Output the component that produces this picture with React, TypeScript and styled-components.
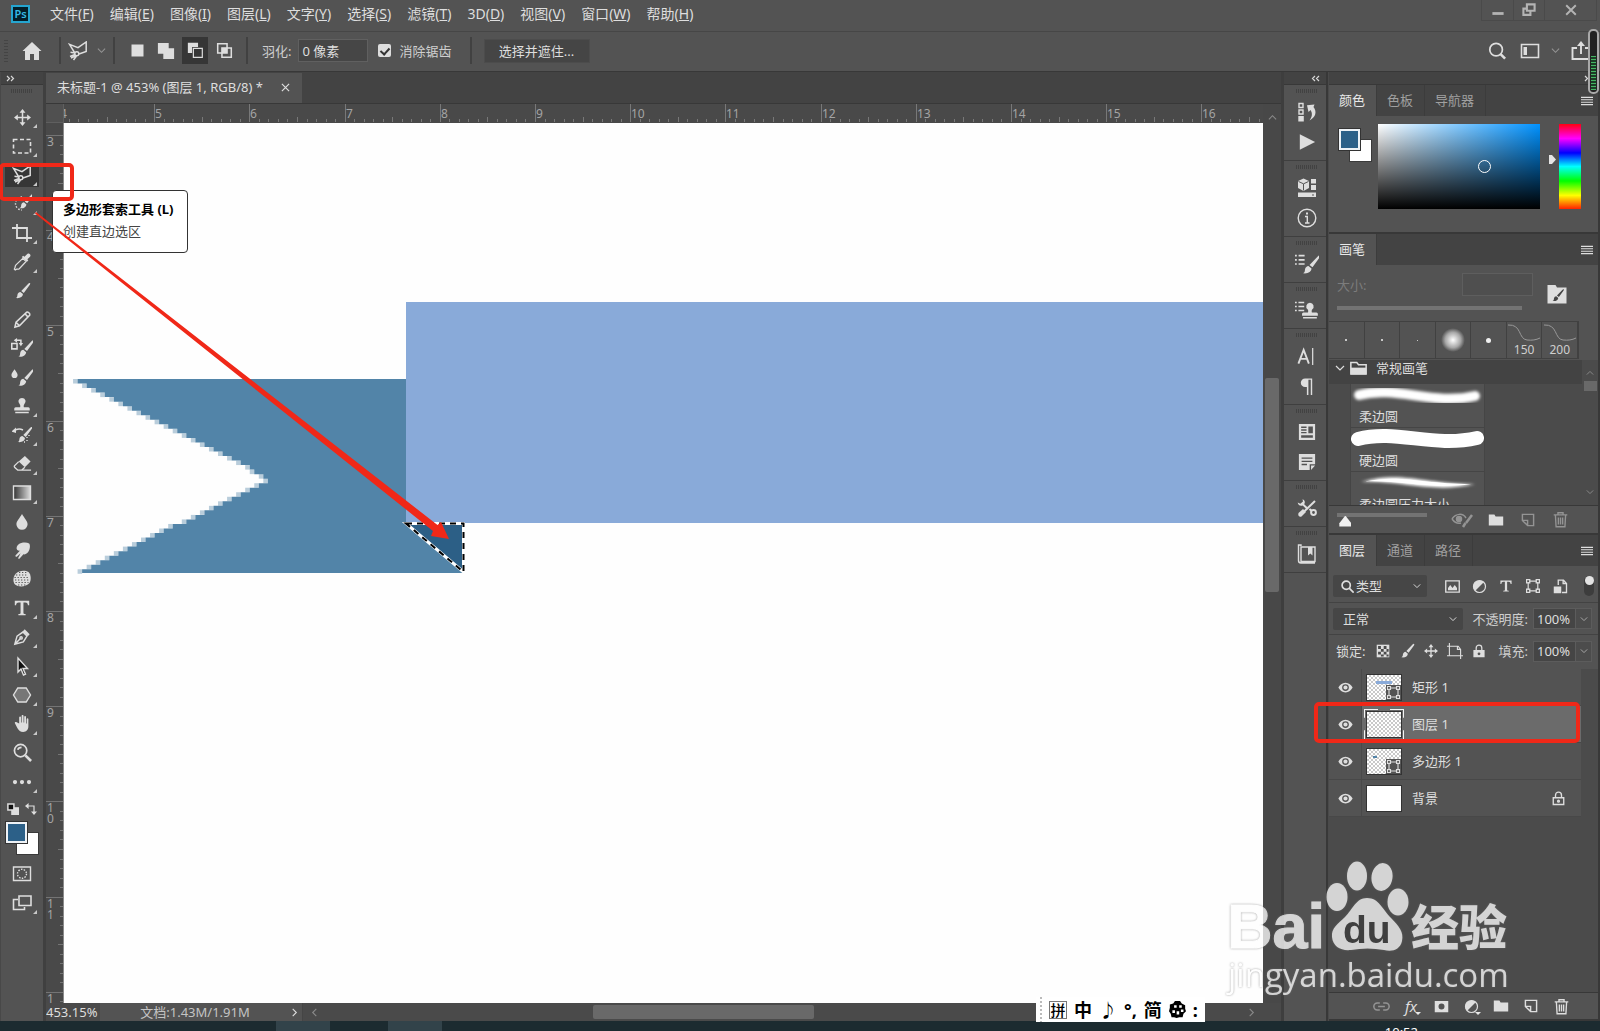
import React from "react";
import styled, { createGlobalStyle, css } from "styled-components";

const c = {
  panel: "#535353",
  dark: "#434343",
  deep: "#383838",
  list: "#4b4b4b",
  text: "#dedede",
  dim: "#a0a0a0",
  red: "#f02818",
};

const Global = createGlobalStyle`
  * { box-sizing: border-box; }
  body {
    margin: 0;
    background: ${c.panel};
    color: ${c.text};
    font-family: "Noto Sans", "Noto Sans CJK SC", sans-serif;
    font-size: 13px;
    line-height: 18px;
  }
  button, input, select { font: inherit; color: inherit; margin: 0; }
  button { border: 0; padding: 0; background: none; display: flex; align-items: center; justify-content: center; }
  svg { display: block; flex: none; }
`;

/* ---------- shell ---------- */
const Shell = styled.div`
  position: relative;
  display: grid;
  grid-template-rows: 32px 40px minmax(0, 1fr) 10px;
  height: 100vh;
  overflow: hidden;
`;
const MenuBar = styled.header`
  display: flex;
  align-items: center;
  padding: 0 3px 4px 11px;
  border-bottom: 1px solid #464646;
  gap: 20px;
`;
const Logo = styled.span`
  width: 19px;
  height: 18px;
  border: 2px solid #25a5d0;
  background: #031e29;
  color: #35b9e6;
  font-size: 11px;
  font-weight: 600;
  line-height: 14px;
  text-align: center;
`;
const Menus = styled.nav`
  display: flex;
  gap: 16px;
  flex: 1;
`;
const MenuItem = styled.button`
  font-size: 14px;
  line-height: 20px;
`;
const WindowButtons = styled.div`
  display: flex;
  align-self: flex-start;
  height: 21px;
  border: 1px solid #4a4a4a;
  border-top: 0;
  color: #b4b4b4;
`;
const WindowButton = styled.button<{ $w: number }>`
  width: ${(p) => p.$w}px;
  & + & { border-left: 1px solid #4a4a4a; }
`;
const OptionsBar = styled.div`
  display: flex;
  align-items: center;
  padding: 0 9px 2px 4px;
  border-bottom: 1px solid ${c.deep};
`;
const Gap = styled.span<{ $w: number }>`
  flex: none;
  width: ${(p) => p.$w}px;
`;
const Sep = styled.span`
  width: 2px;
  height: 27px;
  background: #414141;
`;
const SideGrip = styled.span`
  width: 4px;
  height: 22px;
  background: repeating-linear-gradient(#444 0 1px, transparent 1px 3px);
`;
const IconButton = styled.button<{ $w?: number; $dim?: boolean }>`
  position: relative;
  width: ${(p) => p.$w ?? 20}px;
  height: 24px;
  flex: none;
  color: ${(p) => (p.$dim ? "#949494" : c.text)};
`;
const MenuIconButton = styled(IconButton)`
  align-self: center;
  width: 12px;
`;
const Modes = styled.div`
  display: flex;
  gap: 3px;
`;
const Mode = styled.button<{ $on?: boolean }>`
  width: 26px;
  height: 27px;
  background: ${(p) => (p.$on ? "#363636" : "transparent")};
`;
const OptLabel = styled.label`
  color: #cfcfcf;
`;
const Field = styled.input<{ $w: number; $h?: number }>`
  width: ${(p) => p.$w}px;
  height: ${(p) => p.$h ?? 23}px;
  padding: 0 3px;
  border: 1px solid #606060;
  background: #464646;
  border-radius: 0;
  outline: 0;
`;
const Check = styled.input`
  appearance: none;
  width: 13px;
  height: 13px;
  border-radius: 2px;
  background: ${c.text};
  display: grid;
  place-items: center;
  &::after {
    content: "";
    width: 4px;
    height: 7px;
    border: solid #333;
    border-width: 0 2px 2px 0;
    transform: rotate(42deg);
  }
`;
const PushButton = styled.button`
  width: 106px;
  height: 24px;
  background: #454545;
  border: 1px solid #4c4c4c;
`;
const Push = styled.span`
  flex: 1;
`;

/* ---------- workspace ---------- */
const Work = styled.main`
  display: flex;
  min-height: 0;
`;
const Strip = styled.div<{ $end?: boolean }>`
  height: 13px;
  flex: none;
  display: flex;
  align-items: center;
  justify-content: ${(p) => (p.$end ? "flex-end" : "flex-start")};
  padding: 0 5px;
  background: ${c.dark};
  border-bottom: 1px solid ${c.deep};
`;
const Rail = styled.aside`
  display: flex;
  flex-direction: column;
  width: 46px;
  flex: none;
  border-right: 3px solid #404040;
  border-left: 1px solid #484848;
`;
const TopGrip = styled.span`
  display: block;
  width: 22px;
  height: 4px;
  background: repeating-linear-gradient(90deg, #424242 0 1px, transparent 1px 2px);
`;
const GripRow = styled.div`
  display: flex;
  justify-content: center;
  height: 18px;
  padding-top: 4px;
`;
const Tools = styled.div`
  display: grid;
  grid-template-rows: repeat(24, 1fr);
  height: 693px;
  justify-content: center;
  align-items: center;
`;
const Tool = styled.button<{ $on?: boolean; $more?: boolean }>`
  position: relative;
  width: 34px;
  height: 24px;
  background: ${(p) => (p.$on ? "#363636" : "transparent")};
  ${(p) =>
    p.$more &&
    css`
      &::after {
        content: "";
        position: absolute;
        right: 2px;
        bottom: 1px;
        border: 2px solid transparent;
        border-right-color: #c8c8c8;
        border-bottom-color: #c8c8c8;
      }
    `}
`;
const ColorTools = styled.div`
  display: flex;
  flex-direction: column;
  align-items: center;
`;
const MiniRow = styled.div`
  display: flex;
  justify-content: space-between;
  width: 30px;
  height: 26px;
  align-items: center;
`;
const Swatches = styled.div`
  display: grid;
  grid-template: repeat(3, 11px) / repeat(3, 11px);
`;
const Front = styled.button`
  grid-area: 1 / 1 / 3 / 3;
  z-index: 1;
  background: #2c6088;
  border: 2px solid #eef2f6;
  outline: 1px solid #333;
  margin: 0 1px 1px 0;
`;
const Back = styled.button`
  grid-area: 2 / 2 / 4 / 4;
  background: #fff;
  outline: 1px solid #3a3a3a;
  margin: 0 1px 1px 0;
`;
const LastTools = styled.div`
  display: grid;
  gap: 5px;
  padding-top: 7px;
`;

/* ---------- document ---------- */
const Doc = styled.section`
  flex: 1;
  min-width: 0;
  display: grid;
  grid-template-rows: 32px minmax(0, 1fr) 18px;
`;
const Tabs = styled.div`
  display: flex;
  background: ${c.dark};
  border-bottom: 1px solid ${c.deep};
`;
const DocTab = styled.button`
  padding: 0 12px 2px 11px;
  gap: 18px;
  background: ${c.panel};
  margin-top: 1px;
`;
const View = styled.div`
  display: grid;
  grid-template: 19px minmax(0, 1fr) / 18px minmax(0, 1fr) 18px;
  min-height: 0;
  background: #484848;
`;
const Corner = styled.div`
  background: #505050;
  border: solid #5f5f5f;
  border-width: 0 1px 1px 0;
`;
const RulerSvg = styled.svg`
  width: 100%;
  height: 100%;
  overflow: hidden;
  background: #494949;
  text { font-size: 12px; fill: #a4a4a4; }
`;
const Art = styled.svg`
  width: 100%;
  height: 100%;
  background: #fefefe;
`;
const VScroll = styled.div`
  display: flex;
  flex-direction: column;
  align-items: center;
  grid-row: 1 / 3;
  grid-column: 3;
  padding-top: 9px;
  color: #8a8a8a;
`;
const VThumb = styled.div`
  width: 14px;
  height: 214px;
  margin-top: 256px;
  border-radius: 2px;
  background: #696969;
`;
const Status = styled.footer`
  display: flex;
  align-items: center;
  background: ${c.panel};
`;
const Zoom = styled.input`
  width: 54px;
  height: 18px;
  border: 0;
  padding: 0;
  background: #4a4a4a;
  outline: 0;
`;
const DocSize = styled.span`
  flex: 1;
  text-align: center;
  color: #c4c4c4;
`;
const SizeCell = styled.div`
  display: flex;
  align-items: center;
  width: 203px;
  padding: 0 3px 0 0;
  border-right: 1px solid #454545;
`;
const HScroll = styled.div`
  flex: 1;
  display: flex;
  align-items: center;
  height: 18px;
  padding: 0 5px 0 7px;
  background: #4a4a4a;
  color: #8a8a8a;
`;
const HThumb = styled.div`
  width: 221px;
  height: 14px;
  margin-left: 274px;
  border-radius: 2px;
  background: #696969;
`;

/* ---------- dock ---------- */
const Dock = styled.aside`
  width: 47px;
  flex: none;
  border-left: 3px solid #3e3e3e;
  border-right: 2px solid ${c.deep};
`;
const DockHead = styled(Strip)`
  justify-content: center;
  padding: 0 0 0 20px;
`;
const DockGroup = styled.div`
  display: flex;
  flex-direction: column;
  align-items: center;
  padding: 4px 0 3px 3px;
  border-bottom: 1px solid #3f3f3f;
`;
const DockButtons = styled.div`
  display: grid;
  margin-top: 4px;
`;
const DockButton = styled.button`
  width: 34px;
  height: 30px;
`;

/* ---------- panels ---------- */
const Panels = styled.aside`
  width: 272px;
  flex: none;
  display: flex;
  flex-direction: column;
  border-right: 2px solid ${c.deep};
  border-left: 1px solid #4a4a4a;
`;
const Panel = styled.section<{ $grow?: boolean }>`
  display: flex;
  flex-direction: column;
  flex: ${(p) => (p.$grow ? "1" : "none")};
  min-height: 0;
  border-bottom: 2px solid ${c.deep};
`;
const PanelTabs = styled.div`
  display: flex;
  height: 31px;
  background: ${c.dark};
  padding-right: 5px;
`;
const PanelTab = styled.button<{ $on?: boolean }>`
  padding: 0 11px 1px 10px;
  background: ${(p) => (p.$on ? c.panel : "transparent")};
  color: ${(p) => (p.$on ? "#e8e8e8" : c.dim)};
  border-right: 1px solid #3c3c3c;
`;
const ColorBody = styled.div`
  display: flex;
  height: 116px;
  padding: 8px 17px 0 10px;
`;
const ColorSwatches = styled.div`
  padding: 5px 6px 0 0;
`;
const Spectrum = styled.div`
  position: relative;
  flex: 1;
  height: 85px;
  background: linear-gradient(transparent, #000), linear-gradient(90deg, #fff, #0092ff);
`;
const Ring = styled.span`
  position: absolute;
  left: 62%;
  top: 42%;
  width: 13px;
  height: 13px;
  border: 1px solid #fff;
  border-radius: 50%;
`;
const HueMark = styled.span`
  width: 19px;
  display: flex;
  justify-content: flex-end;
  padding: 31px 2px 0 0;
`;
const Hue = styled.div`
  width: 22px;
  height: 85px;
  background: linear-gradient(#f01, #f0f 17%, #00f 34%, #0ff 50%, #0f0 67%, #ff0 84%, #f20);
`;
const SizeRow = styled.div`
  display: grid;
  grid-template: 29px 18px / 125px 70px 1fr;
  padding: 5px 0 0 8px;
  height: 56px;
  align-items: center;
`;
const SizeLabel = styled.label`
  color: #7c7c7c;
`;
const OffField = styled(Field)`
  border-color: #5e5e5e;
  background: #4f4f4f;
`;
const Slider = styled.input<{ $w: number; $thumb?: boolean }>`
  appearance: none;
  width: ${(p) => p.$w}px;
  height: 4px;
  background: #737373;
  outline: 0;
  &::-webkit-slider-thumb {
    appearance: none;
    width: 12px;
    height: 11px;
    margin-top: 12px;
    background: #f0f0f0;
    clip-path: polygon(50% 0, 100% 70%, 100% 100%, 0 100%, 0 70%);
    opacity: ${(p) => (p.$thumb ? 1 : 0)};
  }
`;
const WideSlider = styled(Slider)`
  grid-column: 1 / 3;
`;
const OpenBrush = styled(IconButton)`
  grid-area: 1 / 3 / 3 / 4;
  justify-self: start;
  margin-left: 15px;
`;
const Recent = styled.div`
  display: grid;
  grid-template-columns: repeat(7, 1fr);
  width: 250px;
  height: 38px;
  border: 1px solid #414141;
  border-left: 0;
`;
const RecentItem = styled.button`
  border-right: 1px solid #414141;
  flex-direction: column;
  justify-content: flex-end;
  font-size: 12px;
  line-height: 16px;
  color: #cfcfcf;
`;
const Dot = styled.i<{ $s: number; $soft?: boolean }>`
  width: ${(p) => p.$s}px;
  height: ${(p) => p.$s}px;
  margin: auto;
  border-radius: 50%;
  background: ${(p) =>
    p.$soft ? "radial-gradient(#fff, #a8a8a8 45%, transparent 70%)" : "#f0f0f0"};
`;
const BrushBox = styled.div`
  display: flex;
  height: 146px;
  margin-top: 1px;
  background: ${c.list};
  border-bottom: 1px solid ${c.deep};
`;
const BrushList = styled.div`
  flex: 1;
  overflow: hidden;
`;
const BrushFolder = styled.div`
  display: flex;
  align-items: center;
  gap: 5px;
  height: 24px;
  padding: 0 0 8px 6px;
  background: ${c.dark};
`;
const FolderName = styled.span`
  padding-left: 4px;
`;
const Brush = styled.div`
  width: 135px;
  height: 44px;
  margin-left: 21px;
  background: ${c.panel};
  border: solid #454545;
  border-width: 0 1px 1px;
`;
const BrushName = styled.div`
  padding-left: 8px;
  line-height: 20px;
`;
const BrushScroll = styled.div`
  width: 16px;
  display: flex;
  flex-direction: column;
  align-items: center;
  justify-content: space-between;
  padding: 9px 0 9px;
  color: #8a8a8a;
`;
const BrushThumb = styled.span`
  width: 13px;
  height: 10px;
  margin: 4px 0 auto;
  background: #696969;
`;
const BrushFoot = styled.div`
  display: flex;
  align-items: center;
  height: 27px;
  padding: 0 28px 0 8px;
`;
const FootSlider = styled(Slider)`
  align-self: flex-start;
  margin-top: 7px;
`;
const FootIcons = styled.div`
  display: flex;
  flex: 1;
  justify-content: flex-end;
  gap: 12px;
`;
const Row = styled.div<{ $h: number }>`
  display: flex;
  align-items: center;
  height: ${(p) => p.$h}px;
  padding: 0 6px 0 4px;
  border-bottom: 1px solid #434343;
`;
const FilterRow = styled(Row)`
  padding: 4px 4px 0 4px;
`;
const LockRow = styled(Row)`
  padding-left: 7px;
  padding-bottom: 2px;
  border-bottom: 0;
`;
const Pick = styled.div<{ $w: number }>`
  display: flex;
  align-items: center;
  width: ${(p) => p.$w}px;
  height: 22px;
  padding: 0 6px 0 8px;
  background: #464646;
  border-radius: 2px;
`;
const Sel = styled.select`
  appearance: none;
  flex: 1;
  min-width: 0;
  border: 0;
  padding: 0 0 0 2px;
  background: transparent;
  outline: 0;
`;
const FilterIcons = styled.div`
  display: flex;
  gap: 7px;
  padding-left: 15px;
  flex: 1;
`;
const Toggle = styled.button`
  width: 10px;
  height: 20px;
  align-items: flex-start;
  border-radius: 5px;
  background: #3d3d3d;
  &::after {
    content: "";
    width: 9px;
    height: 9px;
    border-radius: 50%;
    background: #e4e4e4;
  }
`;
const ValueLabel = styled.label`
  flex: 1;
  text-align: right;
  padding-right: 5px;
  color: #cfcfcf;
`;
const Percent = styled(Field)`
  background: #454545;
  border-color: #5c5c5c;
`;
const Drop = styled.button`
  width: 16px;
  height: 21px;
  border: 1px solid #5c5c5c;
  border-left: 0;
  background: #4c4c4c;
  color: #a8a8a8;
`;
const LockIcons = styled.div`
  display: flex;
  gap: 4px;
  padding-left: 8px;
`;
const Layers = styled.div`
  flex: 1;
  background: ${c.list};
  padding-right: 17px;
`;
const Layer = styled.div<{ $on?: boolean }>`
  position: relative;
  display: grid;
  grid-template-columns: 33px 43px 1fr 44px;
  align-items: center;
  height: 37px;
  background: ${(p) => (p.$on ? `linear-gradient(90deg, ${c.panel} 33px, #6b6b6b 33px)` : c.panel)};
  border-bottom: 1px solid #484848;
`;
const Eye = styled.button`
  height: 36px;
  border-right: 1px solid #494949;
`;
const Thumb = styled.span<{ $plain?: boolean; $on?: boolean }>`
  position: relative;
  width: 36px;
  height: 27px;
  margin-left: 4px;
  border: 1px solid #333;
  background: ${(p) => (p.$plain ? "#fff" : "repeating-conic-gradient(#c9c9c9 0 25%, #fff 0 50%) 0 0 / 4px 4px")};
  ${(p) =>
    p.$on &&
    css`
      &::before {
        content: "";
        position: absolute;
        inset: -3px;
        border: 1px solid #f4f4f4;
        clip-path: polygon(0 0, 35% 0, 35% 20%, 65% 20%, 65% 0, 100% 0, 100% 30%, 80% 30%, 80% 70%, 100% 70%, 100% 100%, 65% 100%, 65% 80%, 35% 80%, 35% 100%, 0 100%, 0 70%, 20% 70%, 20% 30%, 0 30%);
      }
    `}
`;
const Mini = styled.i<{ $shape: "bar" | "flag" }>`
  position: absolute;
  left: ${(p) => (p.$shape === "bar" ? 9 : 6)}px;
  top: ${(p) => (p.$shape === "bar" ? 6 : 7)}px;
  width: ${(p) => (p.$shape === "bar" ? 16 : 4)}px;
  height: ${(p) => (p.$shape === "bar" ? 3 : 2)}px;
  background: ${(p) => (p.$shape === "bar" ? "#89aad9" : "#5284a8")};
`;
const Badge = styled.span`
  position: absolute;
  right: 0;
  bottom: 0;
  width: 15px;
  height: 15px;
  background: ${c.panel};
`;
const LayerName = styled.span`
  padding-left: 7px;
`;
const Highlight = styled.span`
  position: absolute;
  inset: -4px 1px -1px -15px;
  border: 4px solid ${c.red};
  border-radius: 5px;
  z-index: 2;
`;
const PanelFoot = styled.div`
  display: flex;
  justify-content: flex-end;
  gap: 10px;
  height: 27px;
  align-items: center;
  padding-right: 27px;
  border-top: 1px solid ${c.deep};
`;
const FxText = styled.i`
  font-size: 15px;
`;
const MoreMark = styled.span`
  position: absolute;
  right: 0;
  bottom: 3px;
  border: 3px solid transparent;
  border-top-color: #e8e8e8;
  border-bottom: 0;
`;
const Taskbar = styled.footer`
  display: flex;
  background: #1c2b30;
  overflow: hidden;
  color: #fff;
`;
const TaskItem = styled.span<{ $ml: number }>`
  width: 54px;
  margin-left: ${(p) => p.$ml}px;
  background: #32434a;
`;
const Clock = styled.time`
  margin-left: auto;
  padding: 2px 182px 0 0;
`;

/* ---------- floating things ---------- */
const Tip = styled.div`
  position: absolute;
  left: 52px;
  top: 190px;
  width: 136px;
  height: 63px;
  padding: 9px 0 0 10px;
  border: 1px solid #333;
  border-radius: 4px;
  background: #fff;
  color: #444;
  line-height: 27px;
  white-space: nowrap;
`;
const TipTitle = styled.strong`
  display: block;
  line-height: 18px;
  color: #000;
`;
const Marks = styled.svg`
  position: absolute;
  left: 0;
  top: 0;
  pointer-events: none;
`;
const Meter = styled.div`
  position: absolute;
  right: 1px;
  top: 29px;
  width: 11px;
  height: 65px;
  padding: 25px 1px 2px;
  border: 2px solid #a9a9a9;
  border-radius: 5px;
  background: #222;
`;
const Level = styled.div`
  height: 100%;
  background: repeating-linear-gradient(#45b563 0 1px, #1c3d26 1px 3px);
`;
const Ime = styled.div`
  position: absolute;
  right: 395px;
  bottom: 9px;
  display: flex;
  align-items: center;
  gap: 7px;
  width: 169px;
  height: 25px;
  padding: 0 6px 0 4px;
  background: #fff;
  color: #000;
  font-size: 18px;
  font-weight: 700;
`;
const ImeDots = styled.i`
  width: 2px;
  height: 25px;
  background: repeating-linear-gradient(#bbb 0 2px, transparent 2px 4px);
`;
const Pin = styled.span`
  width: 18px;
  height: 18px;
  border: 1px solid #777;
  font-size: 15px;
  line-height: 16px;
  text-align: center;
  font-weight: 500;
`;
const Watermark = styled.div`
  position: absolute;
  right: 86px;
  bottom: 30px;
  width: 288px;
  height: 142px;
  pointer-events: none;
`;
const MarkArt = styled.svg`
  overflow: visible;
  filter: drop-shadow(0 0 1px rgba(110, 110, 110, 0.8));
  opacity: 0.76;
`;

/* ---------- icons ---------- */
type IcoProps = { s?: number; w?: number; children: React.ReactNode };
const Ico = ({ s = 20, w = 1.4, children }: IcoProps) => (
  <svg width={s} height={s} viewBox="0 0 20 20" fill="none" stroke="currentColor" strokeWidth={w} aria-hidden="true">
    {children}
  </svg>
);
const F = (p: React.SVGProps<SVGPathElement>) => <path fill="currentColor" stroke="none" {...p} />;

const Chevron = ({ d = "down", s = 10 }: { d?: "up" | "down" | "left" | "right"; s?: number }) => (
  <Ico s={s} w={2.4}>
    <path d={{ down: "M2 6l8 8 8-8", up: "M2 14l8-8 8 8", left: "M14 2l-8 8 8 8", right: "M6 2l8 8-8 8" }[d]} />
  </Ico>
);
const Doubles = ({ left }: { left?: boolean }) => (
  <svg width="9" height="7" viewBox="0 0 9 7" fill="none" stroke="#d8d8d8" strokeWidth="1.2">
    <path d={left ? "M4 1L1.500 3.500 4 6M8 1L5.500 3.500 8 6" : "M1 1l2.500 2.500L1 6M5 1l2.500 2.500L5 6"} />
  </svg>
);
const Burger = () => (
  <Ico s={12} w={1.8}>
    <path d="M0 4h20M0 8h20M0 12h20M0 16h20" />
  </Ico>
);
const Lasso = () => (
  <Ico w={1.5}>
    <path d="M6.500 11.500L1.500 3.300 10 6.700 18.200 1v9.500l-7.200 2.500" />
    <circle cx="8.800" cy="12.800" r="2" />
    <path d="M7 12l-4.500-.8M7 13.500l-5 2M8.500 15L5.500 19M3 17l4.500-2" />
  </Ico>
);
const BrushShape = () => (
  <>
    <F d="M18.800 1.200c.6.400.4 1-.1 1.800L12 12.200 9.200 10l8-8.300c.6-.6 1.100-.9 1.600-.5z" />
    <F d="M8.200 11l2.900 2.400c-.2 3.100-3.400 5.200-8.100 4.500 2.200-.9 1.600-2.300 2-4 .4-1.700 1.700-2.800 3.200-2.900z" />
  </>
);
const StampShape = () => (
  <F d="M10 1a4 4 0 0 1 2.400 7.200c-.6.700-.6 2.300-.3 3.300H17c1 0 1.600.8 1.600 1.800V15H1.400v-1.700c0-1 .6-1.800 1.600-1.800h4.900c.3-1 .3-2.600-.3-3.300A4 4 0 0 1 10 1zM2.500 16.500h15V18h-15z" />
);
const Move = ({ s = 20 }) => (
  <Ico s={s} w={1.8}>
    <path d="M10 3v14M3 10h14" />
    <F d="M10 0l3.500 4.500h-7zM10 20l3.500-4.500h-7zM0 10l4.500-3.500v7zM20 10l-4.500-3.500v7z" />
  </Ico>
);
const TypeT = ({ s = 20 }) => (
  <Ico s={s}>
    <F d="M2 2h16v5h-1.400c-.3-2.200-.8-3.200-3-3.200h-2v11.400c0 1.200.5 1.500 2.400 1.600V18H6v-1.200c1.900-.1 2.400-.4 2.400-1.600V3.800h-2c-2.200 0-2.700 1-3 3.200H2z" />
  </Ico>
);
const Trash = () => (
  <Ico s={17} w={1.600}>
    <path d="M2 4.500h16M7 4V2h6v2M4 5l.8 13.500h10.400L16 5M7.500 7.500v8.500M10 7.500v8.500M12.500 7.500v8.500" />
  </Ico>
);
const NewItem = () => (
  <Ico s={16} w={1.800}>
    <path d="M3 3h14v14H9.500L3 10.500zM3 10.500h6.500V17" />
  </Ico>
);
const Folder = () => (
  <Ico s={16}>
    <F d="M1 3h7l1.500 2.500H19V17H1z" />
  </Ico>
);
const HalfCircle = ({ s = 18 }) => (
  <Ico s={s} w={1.600}>
    <circle cx="10" cy="10" r="8" />
    <F d="M16 4L4 16A8.500 8.500 0 0 1 16 4z" />
  </Ico>
);
const Frame = ({ s = 18 }) => (
  <Ico s={s} w={1.500}>
    <path d="M5 4h10M5 16h10M4 5v10M16 5v10" />
    <path d="M2 2h4v4H2zM14 2h4v4h-4zM2 14h4v4H2zM14 14h4v4h-4z" />
  </Ico>
);
const EyeIcon = () => (
  <Ico s={15}>
    <F fillRule="evenodd" d="M10 3.500c4.500 0 7.800 3 9.500 6.500-1.700 3.500-5 6.500-9.500 6.500S2.200 13.500.5 10C2.200 6.500 5.500 3.500 10 3.500zM10 5.500a4.500 4.500 0 1 0 0 9 4.500 4.500 0 0 0 0-9zM10 7.200a2.800 2.800 0 1 1 0 5.600 2.800 2.800 0 0 1 0-5.600z" />
  </Ico>
);
const LockIcon = ({ open = false }) => (
  <Ico s={open ? 15 : 14} w={1.800}>
    <path d="M6 9V5.500a4 4 0 0 1 8 0V9" />
    {open ? <path d="M3 9h14v9H3z" /> : <F fillRule="evenodd" d="M2 8.500h16V19H2zM10 12a2 2 0 1 0 0 4 2 2 0 0 0 0-4z" />}
    {open && <circle cx="10" cy="13.500" r="1.200" />}
  </Ico>
);
const BrushIcon = ({ s = 20 }) => (
  <Ico s={s}>
    <BrushShape />
  </Ico>
);

const tools: { name: string; more?: boolean; on?: boolean; icon: React.ReactNode }[] = [
  { name: "移动工具", more: true, icon: <Move s={17} /> },
  { name: "矩形选框工具", more: true, icon: <Ico w={1.600}><path strokeDasharray="4 2.500" d="M1.500 3.500h17v13.500h-17z" /></Ico> },
  { name: "多边形套索工具", more: true, on: true, icon: <Lasso /> },
  {
    name: "快速选择工具", more: true,
    icon: <Ico><path d="M10 3a6.500 6.500 0 1 0 0 13" strokeDasharray="1.500 1.700" /><g transform="translate(5 -1) scale(.85)"><BrushShape /></g></Ico>,
  },
  { name: "裁剪工具", more: true, icon: <Ico w={1.800}><path d="M5 1v14h15M0 5h15v14" /></Ico> },
  {
    name: "吸管工具", more: true,
    icon: <Ico s={18}><path d="M11 6l3.500 3.500-7.500 8c-1 .8-2 .5-3 .5l-1.500.8-1-1 .8-1.800c0-1 .2-2 1-2.800z" /><F d="M15 2c1.500-1.800 3-1.500 3.800-.7.900.9 1 2.300-.8 3.700l-2 2 1 1.200-1.500 1.500L9.800 4.500 11.300 3l1.400 1.200z" /></Ico>,
  },
  { name: "画笔工具", icon: <BrushIcon s={18} /> },
  { name: "铅笔工具", icon: <Ico s={19} w={1.600}><path d="M2 18l1.200-5.200L14.500 2.200c1-.8 3.800 1.800 3.200 3.100L6.800 16.600zM12.500 4l3.500 3.500M3.200 12.800l3.600 3.800" /></Ico> },
  {
    name: "颜色替换工具",
    icon: <Ico s={22}><path d="M.7 6h4.800v4.800H.7zM4 3h5v3" /><F d="M7 5.500h4L9 8.500zM5.500.8v4.400L2.500 3z" /><g transform="translate(4 2) scale(.88)"><BrushShape /></g></Ico>,
  },
  {
    name: "混合器画笔工具",
    icon: <Ico s={22}><F d="M3.200 3c1.500 2.300 2.800 3.700 2.800 5.200a2.800 2.800 0 0 1-5.600 0C.4 6.700 1.700 5.300 3.200 3z" /><g transform="translate(4 2) scale(.88)"><BrushShape /></g></Ico>,
  },
  { name: "仿制图章工具", more: true, icon: <Ico s={18}><StampShape /></Ico> },
  {
    name: "历史记录画笔工具", more: true,
    icon: <Ico><path d="M2 6c3-2.500 6-2.500 9-1M15 12v1M17 10v1M15 15v1M12 17h1" /><F d="M4 2.500V8L-.5 6.500z" /><g transform="translate(3 1) scale(.9)"><BrushShape /></g></Ico>,
  },
  {
    name: "橡皮擦工具", more: true,
    icon: <Ico s={19}><F d="M12.500 2L18.500 8l-6 6-6.500-6z" /><path d="M6 8l-4.500 4.500c-.6 1 0 1.500 3.500 4.500h4l3.500-3M8 17h11" /></Ico>,
  },
  {
    name: "渐变工具", more: true,
    icon: (
      <Ico>
        <defs><linearGradient id="grad"><stop offset="0" stopColor="#333" /><stop offset="1" stopColor="#ddd" /></linearGradient></defs>
        <path fill="url(#grad)" d="M1.500 3h17v13.500h-17z" />
      </Ico>
    ),
  },
  { name: "模糊工具", icon: <Ico s={18}><F d="M10 1c2.500 4.500 6.200 7.700 6.200 11.500a6.200 6.200 0 0 1-12.400 0C3.800 8.700 7.500 5.500 10 1z" /></Ico> },
  { name: "涂抹工具", icon: <Ico s={19}><F d="M6 3.500C8 1.500 14 1 17 2.500c1.500 2 .8 6.500-1 9-1.500 2-3.800 3-5 2.500L7 18.500c-1 .8-2-.2-1.300-1.200L8 13l-4 3.500c-1.200.6-2-.5-1.200-1.400L7.500 10c-1 .5-2 .3-3-.5C3 8 4 5 6 3.500z" /></Ico> },
  {
    name: "海绵工具",
    icon: <Ico><F d="M4 4.500c3-3 9-3.500 12.500-1.500 2.500 2.500 3 8 1 11-3.500 4-11 4.500-14.500 1.500C.5 12.500 1 7.500 4 4.500z" /><path stroke="#555" strokeWidth="1" strokeDasharray="1.300 1.700" d="M4 6h12M2.500 8.500h15M3 11h14M3.500 13.500h13M6 16h8M7 3.500h9" /></Ico>,
  },
  { name: "横排文字工具", more: true, icon: <TypeT s={18} /> },
  {
    name: "钢笔工具", more: true,
    icon: <Ico s={18} w={1.600}><path d="M2 18L4.500 9l6.500-4.500 4.500 4.500-4 6.500zM2 18l6-6" /><circle cx="9" cy="11" r="1.300" /><F d="M13 1.500L18.500 7l-2 2.300L10.800 3.800z" /></Ico>,
  },
  { name: "路径选择工具", more: true, icon: <Ico><path fill="#111" d="M6 2v14l3-3 2.500 6 2-.8-2.500-5.700h4.500z" /></Ico> },
  { name: "多边形工具", more: true, icon: <Ico><path fill="#777" d="M5.800 3h8.400l4.300 7-4.300 7H5.800l-4.300-7z" /></Ico> },
  { name: "抓手工具", more: true, icon: <Ico s={19}><F d="M6.500 10V3.500c0-1.300 1.900-1.300 1.900 0V9h.7V2c0-1.300 2-1.300 2 0v7h.7V3c0-1.200 1.900-1.200 1.900 0v7h.7V5.500c0-1.200 1.800-1.200 1.800 0V13c0 3.500-2 6-5.500 6-3 0-4.500-1.500-6-4L2 9.800c-.6-1.200.9-2 1.900-1z" /></Ico> },
  { name: "缩放工具", icon: <Ico s={19} w={1.800}><circle cx="8" cy="8" r="6.500" /><path d="M13 13l6 6" strokeWidth="2.800" /><path d="M5 7c.5-1.800 2-2.500 4-2.500" /></Ico> },
  { name: "编辑工具栏", more: true, icon: <Ico><F d="M3 8a2 2 0 1 1 0 4.200A2 2 0 0 1 3 8zM10 8a2 2 0 1 1 0 4.200A2 2 0 0 1 10 8zM17 8a2 2 0 1 1 0 4.200A2 2 0 0 1 17 8z" /></Ico> },
];

const Lines = () => <path d="M0 3h1.500M3 3h5M0 6.500h1.500M3 6.500h5M0 10h1.500M3 10h5" />;
const dock: { name: string; icon: React.ReactNode }[][] = [
  [
    { name: "历史记录", icon: <Ico><path d="M2 1.500h4v4H2zM2 8h4v4H2z" /><F d="M1.300 14h5.500v5.500H1.300zM10 3.200L17.500 2.500 16.500 5c3.500 4.500 2.500 10-4 13.500 3-4 3-7.500 1-10.500L11.500 10z" /></Ico> },
    { name: "动作", icon: <Ico s={18}><F d="M2 1.500L19 10 2 18.500z" /></Ico> },
  ],
  [
    { name: "库", icon: <Ico><F d="M1 14.500h18V19H1zM14 1h5v4.500h-5zM14 7h5v5h-5zM6.500.5L12 3v7l-5.500 3L1 10V3z" /><path stroke="#555" strokeWidth="1" d="M1.500 3.500l5 2.300 5-2.300M6.500 6v6.500M15 17h2" /></Ico> },
    { name: "信息", icon: <Ico><circle cx="10" cy="10" r="8.800" /><path d="M8 8.500h2.300V15M8 15h4.500" /><F d="M9 4.500h2v2H9z" /></Ico> },
  ],
  [{ name: "画笔设置", icon: <Ico s={24}><Lines /><g transform="translate(4 2) scale(.88)"><BrushShape /></g></Ico> }],
  [{ name: "仿制源", icon: <Ico s={23}><Lines /><g transform="translate(5 2.500) scale(.8)"><StampShape /></g></Ico> }],
  [
    { name: "字符", icon: <Ico s={19} w={2}><path d="M1.500 17.500L7 3l5.500 14.500M3.500 12.500h7" /><path strokeWidth="1.300" d="M16.500 1v18" /></Ico> },
    { name: "段落", icon: <Ico s={19}><F d="M8.500 1.500H16V19h-1.500V3H12v16h-1.600v-8.500H8.500a4.500 4.500 0 0 1 0-9z" /></Ico> },
  ],
  [
    { name: "属性", icon: <Ico s={18}><F fillRule="evenodd" d="M1 1h18v18H1zM3.500 4v1.500h6V4zM3.500 7v1.500h6V7zM3.500 10v1.500h6V10zM11.500 4v7.500h5V4zM3.500 13.500v3h13v-3z" /></Ico> },
    { name: "注释", icon: <Ico s={18}><F fillRule="evenodd" d="M1 1h18v11.500h-6V19H1zM4 5v1.500h12V5zM4 8.500V10h12V8.500zM4 12v1.500h6V12zM14.500 14H19l-4.500 5z" /></Ico> },
  ],
  [{ name: "工具预设", icon: <Ico w={2}><path d="M3 17.500L18 3" /><F d="M5.500 1.200c2.300.6 3 3 1.700 5l4.300 4 -1.500 1.500L5.700 7.500C3.500 8.500 1 7 .7 4.500L3.300 5.700 6 3.500z" /><circle cx="16.500" cy="14.500" r="2.400" /><path d="M12.500 11l2.300 2" /><F d="M1.500 15l4.500-4 3 3-4.500 4.500c-2 1-4-1-3-3.500z" /></Ico> }],
  [{ name: "学习", icon: <Ico><path d="M4 3h14v14.500H4zM4 2V1h-2.500v15.500c0 1.800 1 2.500 2.500 2.500h14" /><F d="M11 3h4.500v8.500l-2.200-2-2.300 2z" /></Ico> }],
];

const menus = [["文件", "F"], ["编辑", "E"], ["图像", "I"], ["图层", "L"], ["文字", "Y"], ["选择", "S"], ["滤镜", "T"], ["3D", "D"], ["视图", "V"], ["窗口", "W"], ["帮助", "H"]];

/* ---------- canvas drawing ---------- */
const UNIT = 95.2;
const ticks = Array.from({ length: 300 }, (_, i) => i);
const labelsX = Array.from({ length: 13 }, (_, i) => i);
const labelsY = Array.from({ length: 10 }, (_, i) => i);

const RulerX = () => (
  <RulerSvg aria-hidden="true">
    {ticks.map((i) => {
      const x = Math.round(-5 + (i * UNIT) / 10) + 0.5;
      const top = i % 10 === 0 ? 0 : i % 5 === 0 ? 13 : 15;
      return <path key={i} d={`M${x} ${top}V18`} stroke="#787878" />;
    })}
    {labelsX.map((i) => (
      <text key={i} x={Math.round(-4 + i * UNIT)} y="14">{4 + i}</text>
    ))}
  </RulerSvg>
);
const RulerY = () => (
  <RulerSvg aria-hidden="true">
    {ticks.map((i) => {
      const y = Math.round(12 + (i * UNIT) / 10) + 0.5;
      const left = i % 10 === 0 ? 0 : i % 5 === 0 ? 12 : 14;
      return <path key={i} d={`M${left} ${y}H17`} stroke="#747474" />;
    })}
    {labelsY.map((i) =>
      String(3 + i).split("").map((ch, k) => (
        <text key={`${i}-${k}`} x="1" y={Math.round(23 + i * UNIT) + k * 11}>{ch}</text>
      ))
    )}
    <path d="M17.500 0V2000" stroke="#8a8a8a" />
  </RulerSvg>
);

const PX = 4.53;
const steps = Array.from({ length: 43 }, (_, i) => i);
const notchX = (i: number) => {
  const y = i * PX;
  const x = y < 98 ? 14 + (193 * y) / 98 : 9 + (199 * (194 - y)) / 96;
  return Math.round(x / PX) * PX;
};
const ribbon =
  "M400 256V450H14" +
  [...steps].reverse().map((i) => `L${notchX(i)} ${Math.min(256 + (i + 1) * PX, 450)}V${256 + i * PX}`).join("") +
  "Z";

const Artwork = () => (
  <Art role="img" aria-label="丝带图形">
    <path d={ribbon} fill="#5284a8" />
    {steps.map((i) => (
      <rect key={i} x={notchX(i) - PX} y={256 + i * PX} width={PX} height={PX} fill="#5284a8" opacity="0.4" />
    ))}
    <rect x="342" y="179" width="100%" height="221" fill="#89aad9" />
    <path d="M342 400.500H399.500V449z" fill="#2c5f86" stroke="#fff" strokeWidth="3" />
    <path d="M342 400.500H399.500V449z" fill="none" stroke="#000" strokeWidth="2" strokeDasharray="6 5" />
  </Art>
);

export default function App() {
  return (
    <Shell>
      <Global />
      <MenuBar>
        <Logo>Ps</Logo>
        <Menus>
          {menus.map(([n, k]) => (
            <MenuItem key={n}>
              <span>{n}(<u>{k}</u>)</span>
            </MenuItem>
          ))}
        </Menus>
        <WindowButtons>
          <WindowButton $w={31} aria-label="最小化"><Ico s={14}><F d="M2 13h16v4H2z" /></Ico></WindowButton>
          <WindowButton $w={31} aria-label="还原"><Ico s={14} w={3}><path d="M7 2h11v9H7zM6 8H2v9h10v-5" /></Ico></WindowButton>
          <WindowButton $w={52} aria-label="关闭"><Ico s={12} w={3.200}><path d="M2 2l16 16M18 2L2 18" /></Ico></WindowButton>
        </WindowButtons>
      </MenuBar>

      <OptionsBar>
        <SideGrip />
        <Gap $w={13} />
        <IconButton $w={22} aria-label="主页"><Ico><F d="M10 1l9.500 9H17v9h-5v-6H8v6H3v-9H.5z" /></Ico></IconButton>
        <Gap $w={16} />
        <Sep />
        <Gap $w={7} />
        <IconButton aria-label="当前工具"><Lasso /></IconButton>
        <Gap $w={8} />
        <IconButton $w={10} $dim aria-label="工具预设"><Chevron s={9} /></IconButton>
        <Gap $w={7} />
        <Sep />
        <Gap $w={9} />
        <Modes>
          <Mode aria-label="新选区"><Ico s={15}><F d="M2 2h16v16H2z" /></Ico></Mode>
          <Mode aria-label="添加到选区"><Ico s={18}><F d="M1 1h12v6h6v12H7v-6H1z" /></Ico></Mode>
          <Mode $on aria-label="从选区减去"><Ico s={17}><F d="M1 1h12v5H6v7H1z" /><path d="M7.500 7.500h10.500v10.500H7.500z" /></Ico></Mode>
          <Mode aria-label="与选区交叉"><Ico s={17} w={1.800}><path d="M2 2h11v11H2zM7 7h11v11H7z" /><F d="M7 7h6v6H7z" /></Ico></Mode>
        </Modes>
        <Gap $w={9} />
        <Sep />
        <Gap $w={14} />
        <OptLabel htmlFor="feather">羽化:</OptLabel>
        <Gap $w={7} />
        <Field id="feather" $w={70} defaultValue="0 像素" />
        <Gap $w={10} />
        <Check id="aa" type="checkbox" defaultChecked />
        <Gap $w={8} />
        <OptLabel htmlFor="aa">消除锯齿</OptLabel>
        <Gap $w={18} />
        <Sep />
        <Gap $w={12} />
        <PushButton>选择并遮住...</PushButton>
        <Push />
        <IconButton $w={18} aria-label="搜索"><Ico s={18} w={1.900}><circle cx="9" cy="8.500" r="7" /><path d="M14 13.500l5 5" strokeWidth="2.800" /></Ico></IconButton>
        <Gap $w={14} />
        <IconButton aria-label="工作区"><Ico w={1.600}><path d="M1.500 3.500h17v13h-17z" /><F d="M3.500 6H7v8H3.500z" /></Ico></IconButton>
        <Gap $w={9} />
        <IconButton $w={12} $dim aria-label="切换工作区"><Chevron s={9} /></IconButton>
        <Gap $w={10} />
        <IconButton aria-label="共享"><Ico w={1.900}><path d="M6 7H1.500v11h17V7H14M10 13V3" /><F d="M10 0l4 5H6z" /></Ico></IconButton>
      </OptionsBar>

      <Work>
        <Rail>
          <Strip><Doubles /></Strip>
          <GripRow><TopGrip /></GripRow>
          <Tools>
            {tools.map((t) => (
              <Tool key={t.name} $on={t.on} $more={t.more} aria-label={t.name}>{t.icon}</Tool>
            ))}
          </Tools>
          <ColorTools>
            <MiniRow>
              <IconButton $w={12} aria-label="默认颜色"><Ico s={12}><F d="M7 7h13v13H7z" /><path fill="#111" strokeWidth="2.500" d="M1.500 1.500h10v10h-10z" /></Ico></IconButton>
              <IconButton $w={12} aria-label="切换颜色"><Ico s={12} w={2}><path d="M4 5h11v10" /><F d="M6 0v10L0 5zM10 14h10l-5 6z" /></Ico></IconButton>
            </MiniRow>
            <Swatches><Front aria-label="前景色" /><Back aria-label="背景色" /></Swatches>
            <LastTools>
              <Tool aria-label="快速蒙版"><Ico><path d="M1.500 3h17v13.500h-17z" /><circle cx="10" cy="9.800" r="4.500" strokeDasharray="1.500 1.300" /></Ico></Tool>
              <Tool $more aria-label="屏幕模式"><Ico w={1.600}><path d="M7 3h12v9.500H7zM6 6.500H1.500v10h11V14" /></Ico></Tool>
            </LastTools>
          </ColorTools>
        </Rail>

        <Doc>
          <Tabs>
            <DocTab>未标题-1 @ 453% (图层 1, RGB/8) *<Ico s={9} w={2.600}><path d="M2 2l16 16M18 2L2 18" /></Ico></DocTab>
          </Tabs>
          <View>
            <Corner />
            <RulerX />
            <VScroll>
              <Chevron d="up" s={9} />
              <VThumb />
            </VScroll>
            <RulerY />
            <Artwork />
          </View>
          <Status>
            <Zoom aria-label="缩放比例" defaultValue="453.15%" />
            <SizeCell>
              <Gap $w={20} />
              <DocSize>文档:1.43M/1.91M</DocSize>
              <Gap $w={20} />
              <Chevron d="right" s={9} />
            </SizeCell>
            <HScroll>
              <Chevron d="left" s={9} />
              <HThumb />
              <Push />
              <Chevron d="right" s={9} />
              <Gap $w={20} />
            </HScroll>
          </Status>
        </Doc>

        <Dock>
          <DockHead><Doubles left /></DockHead>
          {dock.map((g) => (
            <DockGroup key={g[0].name}>
              <TopGrip />
              <DockButtons>
                {g.map((b) => <DockButton key={b.name} aria-label={b.name}>{b.icon}</DockButton>)}
              </DockButtons>
            </DockGroup>
          ))}
        </Dock>

        <Panels>
          <Strip $end><Doubles /></Strip>
          <Panel>
            <PanelTabs>
              <PanelTab $on>颜色</PanelTab>
              <PanelTab>色板</PanelTab>
              <PanelTab>导航器</PanelTab>
              <Push />
              <MenuIconButton aria-label="面板菜单"><Burger /></MenuIconButton>
            </PanelTabs>
            <ColorBody>
              <ColorSwatches><Swatches><Front aria-label="前景色" /><Back aria-label="背景色" /></Swatches></ColorSwatches>
              <Spectrum><Ring /></Spectrum>
              <HueMark><svg width="8" height="9" viewBox="0 0 8 9"><path d="M0 0h3l4 4.500L3 9H0z" fill="#e4e4e4" /></svg></HueMark>
              <Hue />
            </ColorBody>
          </Panel>

          <Panel>
            <PanelTabs>
              <PanelTab $on>画笔</PanelTab>
              <Push />
              <MenuIconButton aria-label="面板菜单"><Burger /></MenuIconButton>
            </PanelTabs>
            <SizeRow>
              <SizeLabel htmlFor="size">大小:</SizeLabel>
              <OffField id="size" $w={71} disabled />
              <WideSlider type="range" $w={185} disabled aria-label="画笔大小" />
              <OpenBrush aria-label="画笔设置面板"><Ico><F d="M.5 1h8l1.500 2.500h9.500v16H.5z" /><g color="#444" transform="translate(3.500 4.500) scale(.7)"><BrushShape /></g></Ico></OpenBrush>
            </SizeRow>
            <Recent>
              <RecentItem aria-label="画笔 1"><Dot $s={2} /></RecentItem>
              <RecentItem aria-label="画笔 2"><Dot $s={2} /></RecentItem>
              <RecentItem aria-label="画笔 3"><Dot $s={1} /></RecentItem>
              <RecentItem aria-label="柔边圆"><Dot $s={24} $soft /></RecentItem>
              <RecentItem aria-label="硬边圆"><Dot $s={5} /></RecentItem>
              {[150, 200].map((n) => (
                <RecentItem key={n}>
                  <svg width="34" height="18" viewBox="0 0 34 18" fill="none" stroke="#989898"><path d="M1 1c14-1 10 14 19 15 5 .5 9 0 13-2" /></svg>
                  {n}
                </RecentItem>
              ))}
            </Recent>
            <BrushBox>
              <BrushList>
                <BrushFolder>
                  <Chevron s={10} />
                  <Ico s={17} w={1.800}><path d="M1 16.500V3h7l2 2.500h9v11z" /><F d="M1 9h18v8H1z" /></Ico>
                  <FolderName>常规画笔</FolderName>
                </BrushFolder>
                <Brush>
                  <svg width="133" height="22" viewBox="0 0 133 22">
                    <defs><filter id="soft" x="-10%" y="-50%" width="120%" height="200%"><feGaussianBlur stdDeviation="1.600" /></filter></defs>
                    <path d="M8 11C45 1 82 22 124 12" fill="none" stroke="#fff" strokeWidth="10" strokeLinecap="round" filter="url(#soft)" />
                  </svg>
                  <BrushName>柔边圆</BrushName>
                </Brush>
                <Brush>
                  <svg width="133" height="22" viewBox="0 0 133 22">
                    <path d="M7 11C45 1 82 20 126 10" fill="none" stroke="#fff" strokeWidth="14" strokeLinecap="round" />
                  </svg>
                  <BrushName>硬边圆</BrushName>
                </Brush>
                <Brush>
                  <svg width="133" height="22" viewBox="0 0 133 22">
                    <path d="M10 10C50 -2 72 12 124 12C82 22 50 8 10 10z" fill="#fff" filter="url(#soft)" />
                    <path d="M14 9.500C50 2 72 12 120 12C82 18 50 8 14 9.500z" fill="#fff" />
                  </svg>
                  <BrushName>柔边圆压力大小</BrushName>
                </Brush>
              </BrushList>
              <BrushScroll><Chevron d="up" s={8} /><BrushThumb /><Chevron s={8} /></BrushScroll>
            </BrushBox>
            <BrushFoot>
              <FootSlider type="range" $w={90} $thumb defaultValue={3} aria-label="预览大小" />
              <FootIcons>
                <IconButton $w={24} $dim aria-label="显示描边"><svg width="22" height="16" viewBox="0 0 22 16" fill="none" stroke="currentColor" strokeWidth="1.500"><path d="M1 7c4-6 11-6 14-1M1 7c3 4 6 5 9 4" /><circle cx="8" cy="7" r="2.500" fill="currentColor" /><path d="M21 3l-6 8M14.500 11L12 15" strokeWidth="2.500" /></svg></IconButton>
                <IconButton aria-label="新建组"><Folder /></IconButton>
                <IconButton $dim aria-label="新建画笔"><NewItem /></IconButton>
                <IconButton $dim aria-label="删除画笔"><Trash /></IconButton>
              </FootIcons>
            </BrushFoot>
          </Panel>

          <Panel $grow>
            <PanelTabs>
              <PanelTab $on>图层</PanelTab>
              <PanelTab>通道</PanelTab>
              <PanelTab>路径</PanelTab>
              <Push />
              <MenuIconButton aria-label="面板菜单"><Burger /></MenuIconButton>
            </PanelTabs>
            <FilterRow $h={37}>
              <Pick $w={94}>
                <Ico s={13} w={2.600}><circle cx="8" cy="8" r="6.300" /><path d="M12.500 12.500l7 7" /></Ico>
                <Sel aria-label="滤镜类型"><option>类型</option></Sel>
                <Chevron s={8} />
              </Pick>
              <FilterIcons>
                <IconButton aria-label="像素图层"><Ico s={15} w={1.800}><path d="M1 2.500h18v15H1z" /><F d="M4 15v-3l3-4 3 4 3-4 3 4v3z" /></Ico></IconButton>
                <IconButton aria-label="调整图层"><HalfCircle s={15} /></IconButton>
                <IconButton aria-label="文字图层"><TypeT s={14} /></IconButton>
                <IconButton aria-label="形状图层"><Frame s={16} /></IconButton>
                <IconButton aria-label="智能对象"><Ico s={15} w={1.800}><path d="M7 8V1.500h7L18 6v12h-6M13.500 1.500V6H18" /><F d="M1 10h10v9H1z" /></Ico></IconButton>
              </FilterIcons>
              <Toggle aria-label="图层过滤开关" />
            </FilterRow>
            <Row $h={32}>
              <Pick $w={130}>
                <Sel aria-label="混合模式"><option>正常</option></Sel>
                <Chevron s={8} />
              </Pick>
              <ValueLabel htmlFor="opacity">不透明度:</ValueLabel>
              <Percent id="opacity" $w={43} $h={21} defaultValue="100%" />
              <Drop aria-label="不透明度滑块"><Chevron s={8} /></Drop>
            </Row>
            <LockRow $h={34}>
              <span>锁定:</span>
              <LockIcons>
                <IconButton aria-label="锁定透明像素"><Ico s={14}><F d="M1 1h18v18H1z" /><path stroke="none" fill="#4a4a4a" d="M3 3h4v4H3zM11 3h4v4h-4zM7 7h4v4H7zM15 7h3v4h-3zM3 11h4v4H3zM11 11h4v4h-4zM7 15h4v3H7zM15 15h3v3h-3z" /></Ico></IconButton>
                <IconButton aria-label="锁定图像像素"><BrushIcon s={16} /></IconButton>
                <IconButton aria-label="锁定位置"><Move s={14} /></IconButton>
                <IconButton aria-label="锁定画板"><Ico s={16}><path d="M0 4h14l3 4v12M3 0v16h17M3 16H0M13 4v4h4" /></Ico></IconButton>
                <IconButton aria-label="锁定全部"><LockIcon /></IconButton>
              </LockIcons>
              <ValueLabel htmlFor="fill">填充:</ValueLabel>
              <Percent id="fill" $w={43} $h={21} defaultValue="100%" />
              <Drop aria-label="填充滑块"><Chevron s={8} /></Drop>
            </LockRow>
            <Layers>
              <Layer>
                <Eye aria-label="可见性"><EyeIcon /></Eye>
                <Thumb><Mini $shape="bar" /><Badge><Frame s={15} /></Badge></Thumb>
                <LayerName>矩形 1</LayerName>
              </Layer>
              <Layer $on>
                <Eye aria-label="可见性"><EyeIcon /></Eye>
                <Thumb $on />
                <LayerName>图层 1</LayerName>
                <Highlight />
              </Layer>
              <Layer>
                <Eye aria-label="可见性"><EyeIcon /></Eye>
                <Thumb><Mini $shape="flag" /><Badge><Frame s={15} /></Badge></Thumb>
                <LayerName>多边形 1</LayerName>
              </Layer>
              <Layer>
                <Eye aria-label="可见性"><EyeIcon /></Eye>
                <Thumb $plain />
                <LayerName>背景</LayerName>
                <IconButton $w={42} aria-label="已锁定"><LockIcon open /></IconButton>
              </Layer>
            </Layers>
            <PanelFoot>
              <IconButton $dim aria-label="链接图层"><Ico s={17} w={1.800}><path d="M8 6H5a4 4 0 0 0 0 8h3M12 6h3a4 4 0 0 1 0 8h-3M6 10h8" /></Ico></IconButton>
              <IconButton aria-label="图层样式"><FxText>fx</FxText><MoreMark /></IconButton>
              <IconButton aria-label="添加蒙版"><Ico s={15}><F fillRule="evenodd" d="M1 2.500h18v15H1zM10 6a4 4 0 1 0 0 8 4 4 0 0 0 0-8z" /></Ico></IconButton>
              <IconButton aria-label="调整图层"><HalfCircle s={15} /><MoreMark /></IconButton>
              <IconButton aria-label="新建组"><Folder /></IconButton>
              <IconButton aria-label="新建图层"><NewItem /></IconButton>
              <IconButton aria-label="删除图层"><Trash /></IconButton>
            </PanelFoot>
          </Panel>
        </Panels>
      </Work>

      <Taskbar>
        <TaskItem $ml={276} />
        <TaskItem $ml={58} />
        <Clock>10:52</Clock>
      </Taskbar>

      <Tip role="tooltip">
        <TipTitle>多边形套索工具 (L)</TipTitle>
        创建直边选区
      </Tip>
      <Marks width="480" height="560" viewBox="0 0 480 560" aria-hidden="true">
        <rect x="1" y="165" width="71" height="34" rx="3" fill="none" stroke={c.red} strokeWidth="4" />
        <path d="M36 212L437.500 525 441 522 449 539 431 536 433 531 35 213.500z" fill={c.red} />
      </Marks>
      <Meter><Level /></Meter>
      <Watermark>
        <MarkArt width="288" height="142" viewBox="0 0 288 142" fill="#fff">
          <text x="1" y="89" fontFamily="Liberation Sans, sans-serif" fontWeight="700" fontSize="63" stroke="#fff" strokeWidth="1">Bai</text>
          <ellipse cx="111" cy="38" rx="10.500" ry="14" />
          <ellipse cx="131" cy="17" rx="10" ry="14.500" />
          <ellipse cx="156" cy="18" rx="10.500" ry="14" transform="rotate(8 156 18)" />
          <ellipse cx="172" cy="43" rx="10.500" ry="13.500" />
          <path d="M141 39c12 0 15 11 24 20 8 8 13 14 11 23-2 9-10 11-18 9-11-2-22-2-33 0-10 1-18-3-19-13-1-9 6-13 13-20 8-8 11-19 22-19z" />
          <text x="117" y="84" fill="#3c3c3c" fontFamily="Liberation Sans, sans-serif" fontWeight="700" fontSize="39">du</text>
          <text x="185" y="86" fontFamily="Noto Sans CJK SC, sans-serif" fontWeight="900" fontSize="48">经验</text>
          <text x="2" y="128" fontFamily="Open Sans, sans-serif" fontSize="33" fontWeight="500">jingyan.baidu.com</text>
        </MarkArt>
      </Watermark>
      <Ime>
        <ImeDots />
        <Pin>拼</Pin>
        <span>中</span>
        <span>♪</span>
        <span>°,</span>
        <span>简</span>
        <Ico s={17}><F fillRule="evenodd" d="M7 0h6l2 3 4 2v4l1 3-3 3-1 4h-4l-3 1-3-1H3l-1-4-2-3 1-4V4l4-1zM6 5v3h3V5zM12 5v3h3V5zM4 11v3h3v-3zM9 12v4h3v-4zM14 10v3h3v-3z" /></Ico>
        <span>:</span>
      </Ime>
    </Shell>
  );
}
